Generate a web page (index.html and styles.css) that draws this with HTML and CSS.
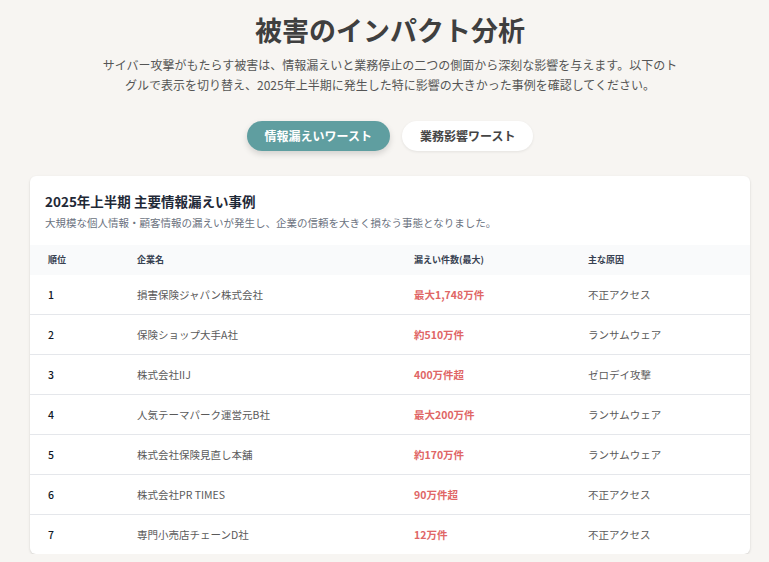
FILE: index.html
```html
<!DOCTYPE html>
<html lang="ja">
<head>
<meta charset="utf-8">
<title>被害のインパクト分析</title>
<link rel="stylesheet" href="styles.css">
</head>
<body>
<main class="wrap">
  <header class="intro">
    <h1 class="title">被害のインパクト分析</h1>
    <p class="lead">サイバー攻撃がもたらす被害は、情報漏えいと業務停止の二つの側面から深刻な影響を与えます。以下のトグルで表示を切り替え、2025年上半期に発生した特に影響の大きかった事例を確認してください。</p>
  </header>
  <div class="toggles">
    <button class="tog tog-active">情報漏えいワースト</button>
    <button class="tog">業務影響ワースト</button>
  </div>
  <section class="card">
    <div class="card-head">
      <h2 class="card-title">2025年上半期 主要情報漏えい事例</h2>
      <p class="card-sub">大規模な個人情報・顧客情報の漏えいが発生し、企業の信頼を大きく損なう事態となりました。</p>
    </div>
    <table class="tbl">
      <thead>
        <tr><th class="c1">順位</th><th class="c2">企業名</th><th class="c3">漏えい件数(最大)</th><th class="c4">主な原因</th></tr>
      </thead>
      <tbody>
        <tr><td class="rank">1</td><td>損害保険ジャパン株式会社</td><td class="amt">最大1,748万件</td><td>不正アクセス</td></tr>
        <tr><td class="rank">2</td><td>保険ショップ大手A社</td><td class="amt">約510万件</td><td>ランサムウェア</td></tr>
        <tr><td class="rank">3</td><td>株式会社IIJ</td><td class="amt">400万件超</td><td>ゼロデイ攻撃</td></tr>
        <tr><td class="rank">4</td><td>人気テーマパーク運営元B社</td><td class="amt">最大200万件</td><td>ランサムウェア</td></tr>
        <tr><td class="rank">5</td><td>株式会社保険見直し本舗</td><td class="amt">約170万件</td><td>ランサムウェア</td></tr>
        <tr><td class="rank">6</td><td>株式会社PR TIMES</td><td class="amt">90万件超</td><td>不正アクセス</td></tr>
        <tr><td class="rank">7</td><td>専門小売店チェーンD社</td><td class="amt">12万件</td><td>不正アクセス</td></tr>
      </tbody>
    </table>
  </section>
</main>
</body>
</html>
```
FILE: styles.css
```css
* { box-sizing: border-box; }
html, body { margin: 0; padding: 0; }
body {
  background: #f7f5f2;
  font-family: "Noto Sans CJK JP", "Noto Sans", sans-serif;
  color: #3d3d3d;
}
.wrap {
  width: 720px;
  margin-left: 30px;
  padding-top: 15px;
  display: flex;
  flex-direction: column;
  align-items: center;
}
.intro { text-align: center; }
.title {
  margin: 0;
  font-size: 27px;
  line-height: 30px;
  font-weight: 700;
  color: #3f3f3f;
}
.lead {
  margin: 10px auto 0;
  width: 582px;
  font-size: 12px;
  line-height: 19.5px;
  color: #555;
}
.toggles {
  margin-top: 27px;
  display: flex;
  gap: 12px;
}
.tog {
  border: none;
  border-radius: 999px;
  padding: 6px 18px;
  font-family: inherit;
  font-size: 12px;
  line-height: 18px;
  font-weight: 700;
  background: #fff;
  color: #444;
  box-shadow: 0 1px 3px rgba(0,0,0,0.08);
}
.tog-active {
  background: #5f9ea0;
  color: #fff;
  box-shadow: 0 3px 6px rgba(0,0,0,0.15);
}
.card {
  margin-top: 25px;
  width: 720px;
  background: #fff;
  border-radius: 6px;
  box-shadow: 0 1px 3px rgba(0,0,0,0.1), 0 1px 2px rgba(0,0,0,0.06);
  overflow: hidden;
}
.card-head { padding: 15px; }
.card-title {
  margin: 0;
  font-size: 13.5px;
  line-height: 21px;
  font-weight: 700;
  color: #1f2937;
}
.card-sub {
  margin: 3px 0 0;
  font-size: 10.5px;
  line-height: 15px;
  color: #6b7280;
}
.tbl {
  width: 100%;
  border-collapse: collapse;
  table-layout: fixed;
}
.tbl th {
  background: #f9fafb;
  text-align: left;
  padding: 9px 18px;
  font-size: 9px;
  line-height: 12px;
  font-weight: 700;
  color: #374151;
}
.c1 { width: 89px; }
.c2 { width: 277px; }
.c3 { width: 174px; }
.c4 { width: 180px; }
.tbl td {
  padding: 12px 18px;
  font-size: 10.5px;
  line-height: 15px;
  color: #5a5a5a;
  border-top: 1px solid #e5e7eb;
}
.tbl tbody tr:first-child td { border-top: none; }
.tbl td.rank { color: #111827; font-weight: 500; }
.tbl td.amt { color: #e06666; font-weight: 700; }
```
